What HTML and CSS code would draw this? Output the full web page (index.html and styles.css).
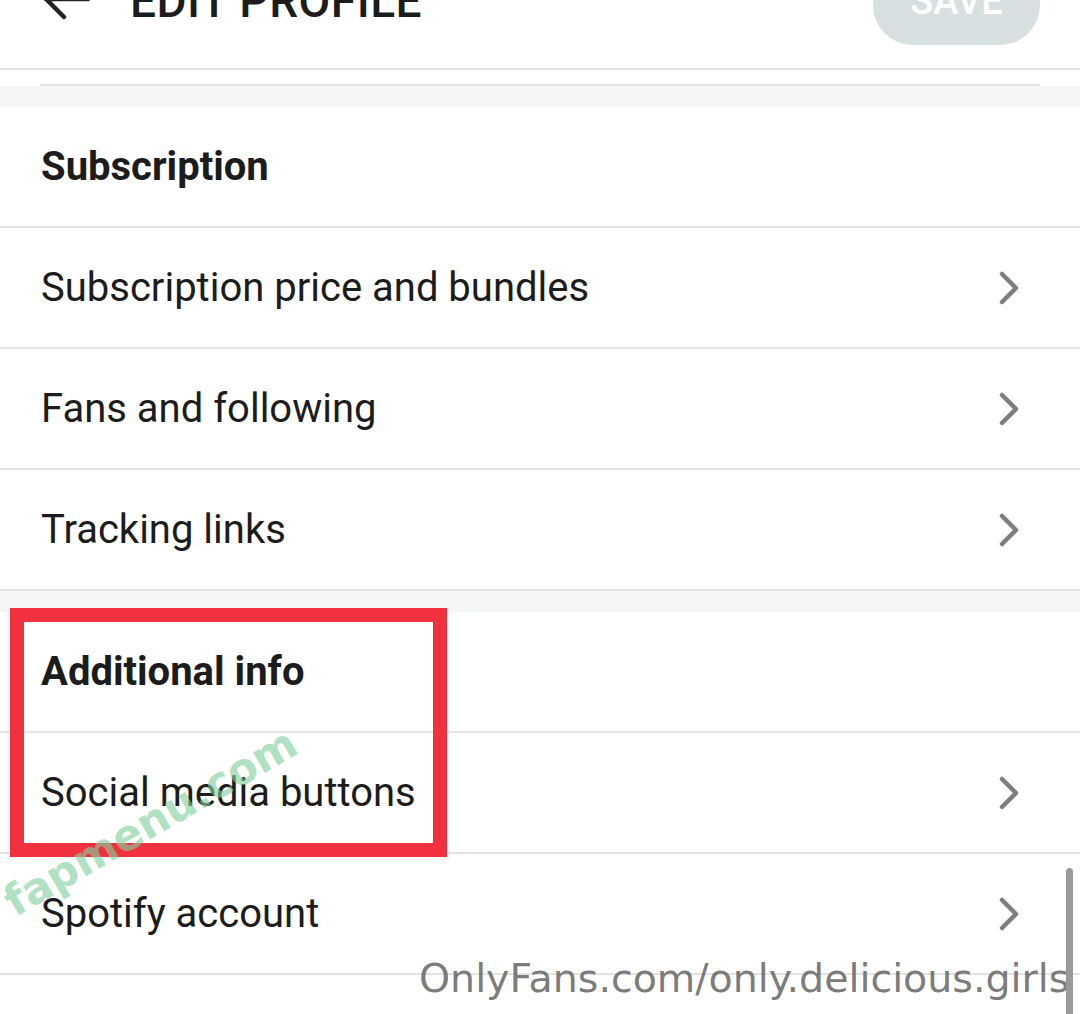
FILE: index.html
```html
<!DOCTYPE html>
<html lang="en">
<head>
    <meta charset="UTF-8">
    <meta name="viewport" content="width=device-width, initial-scale=1.0">
    <title>Edit Profile</title>
    <link rel="stylesheet" href="styles.css">
</head>
<body>
    <div class="page">
        <div class="header">
            <svg class="back" width="60" height="60" viewBox="0 0 60 60">
                <path d="M52 30 H10 M28 12 L10 30 L28 48" fill="none" stroke="#222" stroke-width="4.5" stroke-linecap="round" stroke-linejoin="round"/>
            </svg>
            <div class="title">EDIT PROFILE</div>
            <button class="save">SAVE</button>
        </div>
        <div class="sub-line"></div>
        <div class="band"></div>

        <div class="section-head">Subscription</div>
        <div class="row"><span>Subscription price and bundles</span><svg class="chev" width="30" height="40" viewBox="0 0 30 40"><path d="M7 6 L21 20 L7 34" fill="none" stroke="#7d7d7d" stroke-width="4.5" stroke-linecap="round" stroke-linejoin="round"/></svg></div>
        <div class="row"><span>Fans and following</span><svg class="chev" width="30" height="40" viewBox="0 0 30 40"><path d="M7 6 L21 20 L7 34" fill="none" stroke="#7d7d7d" stroke-width="4.5" stroke-linecap="round" stroke-linejoin="round"/></svg></div>
        <div class="row"><span>Tracking links</span><svg class="chev" width="30" height="40" viewBox="0 0 30 40"><path d="M7 6 L21 20 L7 34" fill="none" stroke="#7d7d7d" stroke-width="4.5" stroke-linecap="round" stroke-linejoin="round"/></svg></div>

        <div class="band"></div>

        <div class="section-head">Additional info</div>
        <div class="row"><span>Social media buttons</span><svg class="chev" width="30" height="40" viewBox="0 0 30 40"><path d="M7 6 L21 20 L7 34" fill="none" stroke="#7d7d7d" stroke-width="4.5" stroke-linecap="round" stroke-linejoin="round"/></svg></div>
        <div class="row"><span>Spotify account</span><svg class="chev" width="30" height="40" viewBox="0 0 30 40"><path d="M7 6 L21 20 L7 34" fill="none" stroke="#7d7d7d" stroke-width="4.5" stroke-linecap="round" stroke-linejoin="round"/></svg></div>

        <div class="highlight"></div>
        <div class="mark-green">fapmenu.com</div>
        <div class="mark-gray">OnlyFans.com/only.delicious.girls</div>
        <div class="scrollbar"></div>
    </div>
</body>
</html>
```

FILE: styles.css
```css
body {
    margin: 0;
    background-color: #fff;
    font-family: Roboto, "Noto Sans", sans-serif;
    color: #1c1c1c;
    overflow: hidden;
}
.page {
    position: relative;
    width: 1080px;
    height: 1014px;
    overflow: hidden;
}
.header {
    display: flex;
    align-items: center;
    height: 136px;
    margin-top: -74px;
    padding: 0 40px 6px 36px;
    border-bottom: 2px solid #e3e3e3;
}
.back {
    flex: none;
    margin-top: 10px;
}
.title {
    margin-left: 34px;
    margin-top: 14px;
    font-size: 46px;
    font-weight: 500;
    letter-spacing: 0.5px;
    color: #1c1c1c;
    flex: 1;
}
.save {
    width: 167px;
    height: 88px;
    border: none;
    border-radius: 40px;
    background-color: #d8dfe0;
    color: #fff;
    font-family: Roboto, sans-serif;
    font-size: 38px;
    font-weight: 500;
    margin-top: 14px;
}
.sub-line {
    height: 14px;
    margin: 0 40px;
    border-bottom: 2px solid #e3e3e3;
}
.band {
    height: 21px;
    background-color: #f4f5f5;
}
.section-head {
    height: 119px;
    display: flex;
    align-items: center;
    padding-left: 41px;
    font-size: 40px;
    font-weight: 700;
    border-bottom: 2px solid #e3e3e3;
}
.row {
    height: 119px;
    display: flex;
    align-items: center;
    justify-content: space-between;
    padding: 0 55px 0 41px;
    font-size: 40px;
    border-bottom: 2px solid #e3e3e3;
}
.highlight {
    position: absolute;
    left: 10px;
    top: 608px;
    width: 409px;
    height: 221px;
    border: 14px solid #f2313f;
}
.mark-green {
    position: absolute;
    left: 20px;
    top: 876px;
    font-family: "DejaVu Sans", sans-serif;
    font-size: 43px;
    font-weight: 700;
    color: rgba(130, 208, 158, 0.65);
    transform: rotate(-30deg);
    transform-origin: left bottom;
}
.mark-gray {
    position: absolute;
    left: 419px;
    top: 955px;
    font-family: "DejaVu Sans", sans-serif;
    font-size: 39.5px;
    color: rgba(100, 100, 100, 0.85);
}
.scrollbar {
    position: absolute;
    left: 1066px;
    top: 868px;
    width: 7px;
    height: 160px;
    border-radius: 4px;
    background-color: #9a9a9a;
}
```
